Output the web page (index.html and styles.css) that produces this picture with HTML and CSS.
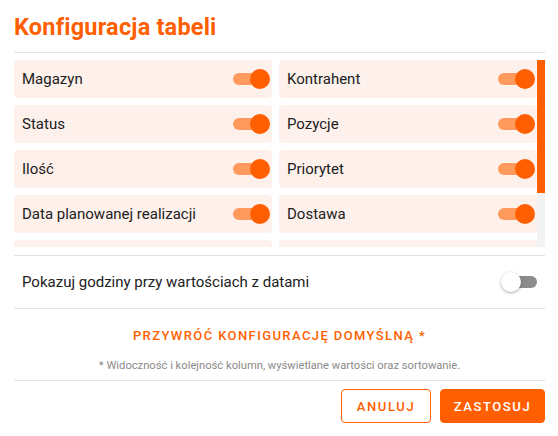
FILE: index.html
```html
<!DOCTYPE html>
<html lang="pl">
<head>
<meta charset="utf-8">
<title>Konfiguracja tabeli</title>
<link rel="stylesheet" href="styles.css">
</head>
<body>
<div class="dialog">
  <header class="header">
    <h1 class="title">Konfiguracja tabeli</h1>
  </header>
  <div class="columns-wrap">
    <div class="columns-viewport">
      <div class="columns">
        <div class="col-item"><span class="col-label">Magazyn</span><span class="toggle on"><span class="track"></span><span class="knob"></span></span></div>
        <div class="col-item"><span class="col-label">Kontrahent</span><span class="toggle on"><span class="track"></span><span class="knob"></span></span></div>
        <div class="col-item"><span class="col-label">Status</span><span class="toggle on"><span class="track"></span><span class="knob"></span></span></div>
        <div class="col-item"><span class="col-label">Pozycje</span><span class="toggle on"><span class="track"></span><span class="knob"></span></span></div>
        <div class="col-item"><span class="col-label">Ilość</span><span class="toggle on"><span class="track"></span><span class="knob"></span></span></div>
        <div class="col-item"><span class="col-label">Priorytet</span><span class="toggle on"><span class="track"></span><span class="knob"></span></span></div>
        <div class="col-item"><span class="col-label">Data planowanej realizacji</span><span class="toggle on"><span class="track"></span><span class="knob"></span></span></div>
        <div class="col-item"><span class="col-label">Dostawa</span><span class="toggle on"><span class="track"></span><span class="knob"></span></span></div>
        <div class="col-item"><span class="toggle on"><span class="track"></span><span class="knob"></span></span></div>
        <div class="col-item"><span class="toggle on"><span class="track"></span><span class="knob"></span></span></div>
        <div class="col-item"><span class="toggle on"><span class="track"></span><span class="knob"></span></span></div>
        <div class="col-item"><span class="toggle on"><span class="track"></span><span class="knob"></span></span></div>
      </div>
    </div>
    <div class="scrollbar"><div class="scrollbar-thumb"></div></div>
  </div>
  <div class="option-row">
    <span class="option-label">Pokazuj godziny przy wartościach z datami</span>
    <span class="toggle off"><span class="track"></span><span class="knob"></span></span>
  </div>
  <div class="reset">
    <button class="reset-link" type="button">PRZYWRÓĆ KONFIGURACJĘ DOMYŚLNĄ *</button>
    <p class="reset-note">* Widoczność i kolejność kolumn, wyświetlane wartości oraz sortowanie.</p>
  </div>
  <footer class="actions">
    <button class="btn btn-outline" type="button">ANULUJ</button>
    <button class="btn btn-primary" type="button">ZASTOSUJ</button>
  </footer>
</div>
</body>
</html>
```
FILE: styles.css
```css
* { box-sizing: border-box; }
html, body { margin: 0; padding: 0; background: #fff; }
body {
  font-family: Roboto, "Liberation Sans", sans-serif;
  color: #212121;
  width: 558px;
  height: 436px;
  overflow: hidden;
}
.dialog {
  padding: 0 13px 0 14px;
}
.header {
  height: 53px;
  border-bottom: 1px solid #e2e2e2;
  padding-top: 13px;
}
.title {
  margin: 0;
  font-size: 23.5px;
  line-height: 28px;
  font-weight: 700;
  letter-spacing: 0.2px;
  color: #ff5f00;
}
.columns-wrap {
  margin-top: 7px;
  height: 187px;
  display: flex;
}
.columns-viewport {
  flex: 1;
  overflow: hidden;
}
.scrollbar {
  width: 8px;
  flex: none;
  background: #f3f3f3;
}
.scrollbar-thumb {
  height: 133px;
  background: #ff5f00;
}
.columns {
  display: grid;
  grid-template-columns: 1fr 1fr;
  grid-auto-rows: 38px;
  gap: 7px;
}
.col-item {
  display: flex;
  align-items: center;
  justify-content: space-between;
  background: #fef0eb;
  border-radius: 4px;
  padding: 0 2px 0 8px;
}
.col-item .toggle:first-child { margin-left: auto; }
.col-label {
  font-size: 15px;
  line-height: 20px;
}
.toggle {
  position: relative;
  display: inline-block;
  width: 37px;
  height: 20px;
  flex: none;
}
.toggle .track {
  position: absolute;
  top: 4px;
  width: 34px;
  height: 12px;
  border-radius: 6px;
}
.toggle .knob {
  position: absolute;
  top: 0;
  width: 20px;
  height: 20px;
  border-radius: 50%;
}
.toggle.on .track { left: 0; background: #ff9a5c; }
.toggle.on .knob { right: 0; background: #ff5f00; }
.toggle.off { width: 36px; }
.toggle.off .track { left: 4px; width: 32px; background: #8c8c8c; }
.toggle.off .knob { left: 0; background: #fff; box-shadow: 0 1px 3px rgba(0,0,0,0.35); }
.option-row {
  margin-top: 8px;
  height: 54px;
  border-top: 1px solid #e2e2e2;
  border-bottom: 1px solid #e2e2e2;
  display: flex;
  align-items: center;
  justify-content: space-between;
  padding: 0 8px 0 8px;
}
.option-label {
  font-size: 15px;
  line-height: 20px;
}
.reset {
  height: 72px;
  border-bottom: 1px solid #e2e2e2;
  display: flex;
  flex-direction: column;
  align-items: center;
  padding-top: 18px;
}
.reset-link {
  border: 0;
  background: none;
  padding: 0;
  font-family: inherit;
  font-size: 13px;
  line-height: 18px;
  font-weight: 500;
  letter-spacing: 1.4px;
  color: #ff5f00;
  cursor: pointer;
}
.reset-note {
  margin: 14px 0 0;
  font-size: 11.2px;
  line-height: 14px;
  color: #8a8a8a;
}
.actions {
  display: flex;
  justify-content: flex-end;
  gap: 9px;
  padding-top: 8px;
}
.btn {
  height: 34px;
  border-radius: 4px;
  font-family: inherit;
  font-size: 13px;
  font-weight: 500;
  letter-spacing: 1.6px;
  cursor: pointer;
  padding: 0;
}
.btn-outline {
  width: 90px;
  background: #fff;
  border: 1px solid #ff5f00;
  color: #ff5f00;
}
.btn-primary {
  width: 105px;
  background: #ff5f00;
  border: 1px solid #ff5f00;
  color: #fff;
}
```
